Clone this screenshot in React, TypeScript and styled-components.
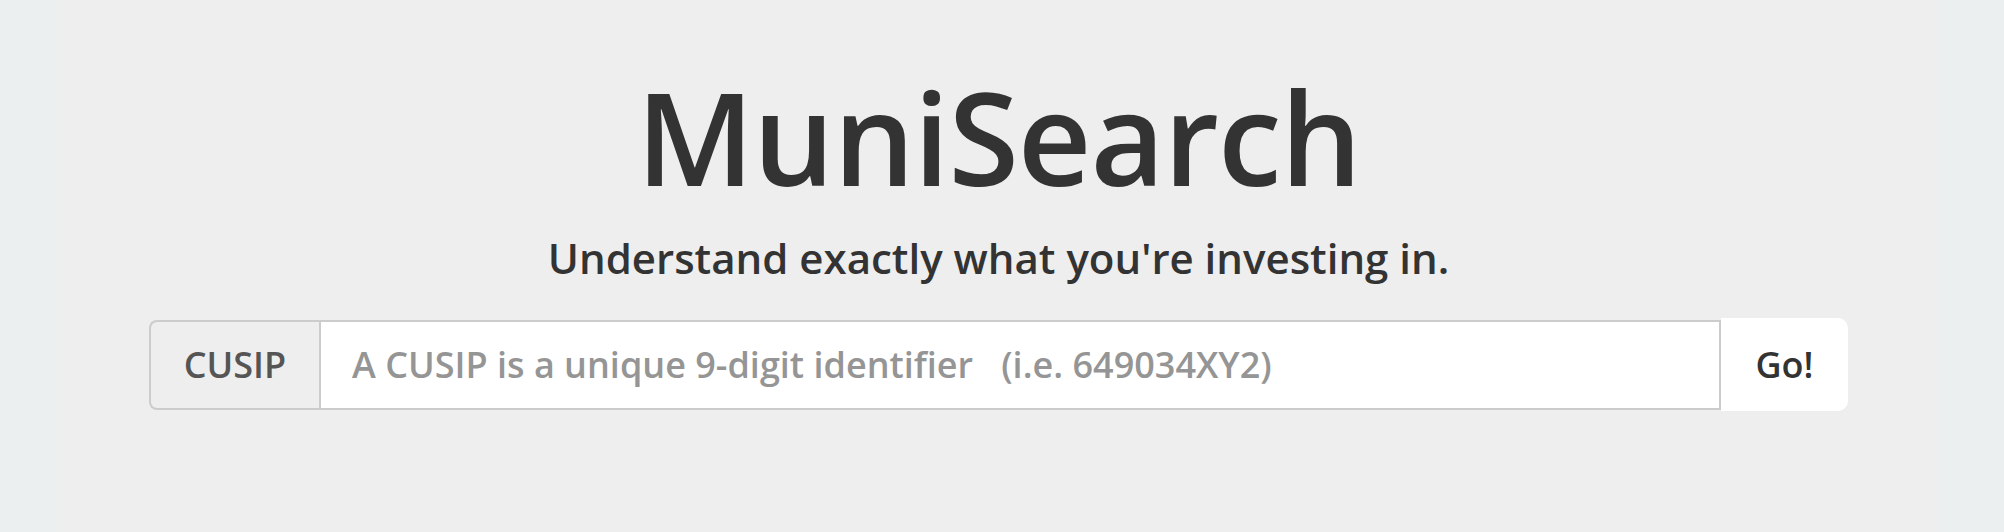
import React, { useState } from "react";
import styled, { createGlobalStyle } from "styled-components";

const GlobalStyle = createGlobalStyle`
  html, body {
    margin: 0;
    padding: 0;
    background: #ebeff0;
    font-family: "Open Sans", "Liberation Sans", sans-serif;
  }
`;

const Page = styled.div`
  padding: 0 66px 0 58px;
`;

const Jumbotron = styled.div`
  background: #eeeeee;
  height: 532px;
  box-sizing: border-box;
  padding: 73px 90px 0 91px;
  text-align: center;
  color: #333;
`;

const Title = styled.h1`
  margin: 0;
  font-size: 128px;
  line-height: 1;
  font-weight: 600;
  letter-spacing: -1px;
`;

const Subtitle = styled.p`
  margin: 36px 0 0;
  font-size: 42px;
  line-height: 1;
  font-weight: 600;
`;

const SearchRow = styled.form`
  display: flex;
  align-items: center;
  margin-top: 39px;
`;

const InputGroup = styled.div`
  flex: 1;
  display: flex;
  height: 90px;
  box-sizing: border-box;
`;

const Addon = styled.span`
  display: flex;
  align-items: center;
  justify-content: center;
  width: 170px;
  box-sizing: border-box;
  background: #eeeeee;
  border: 2px solid #cccccc;
  border-right: none;
  border-radius: 8px 0 0 8px;
  color: #555;
  font-size: 36px;
  font-weight: 600;
`;

const Field = styled.input`
  flex: 1;
  min-width: 0;
  box-sizing: border-box;
  border: 2px solid #cccccc;
  background: #fff;
  padding: 0 31px;
  font-family: inherit;
  font-size: 36px;
  font-weight: 600;
  color: #333;
  outline: none;
  &::placeholder {
    color: #959595;
    opacity: 1;
    white-space: pre;
  }
`;

const GoButton = styled.button`
  width: 127px;
  height: 93px;
  border: none;
  background: #fff;
  border-radius: 0 10px 10px 0;
  font-family: inherit;
  font-size: 36px;
  font-weight: 600;
  color: #333;
  cursor: pointer;
`;

const App = () => {
  const [cusip, setCusip] = useState("");

  return (
    <>
      <GlobalStyle />
      <Page>
        <Jumbotron>
          <Title>MuniSearch</Title>
          <Subtitle>Understand exactly what you're investing in.</Subtitle>
          <SearchRow onSubmit={(e) => e.preventDefault()}>
            <InputGroup>
              <Addon>CUSIP</Addon>
              <Field
                value={cusip}
                onChange={(e) => setCusip(e.target.value)}
                placeholder="A CUSIP is a unique 9-digit identifier   (i.e. 649034XY2)"
              />
            </InputGroup>
            <GoButton type="submit">Go!</GoButton>
          </SearchRow>
        </Jumbotron>
      </Page>
    </>
  );
};

export default App;
